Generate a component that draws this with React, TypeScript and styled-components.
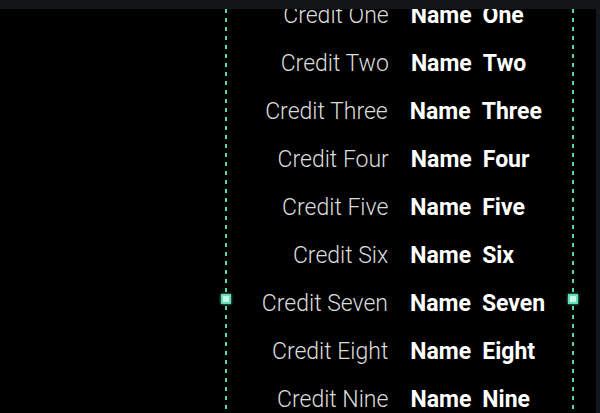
import styled, { createGlobalStyle } from 'styled-components';

const credits = [
  ['Credit One', 'One'],
  ['Credit Two', 'Two'],
  ['Credit Three', 'Three'],
  ['Credit Four', 'Four'],
  ['Credit Five', 'Five'],
  ['Credit Six', 'Six'],
  ['Credit Seven', 'Seven'],
  ['Credit Eight', 'Eight'],
  ['Credit Nine', 'Nine'],
  ['Credit Ten', 'Ten'],
];

const App = () => {
  return (
    <>
      <GlobalStyle />
      <Screen>
        <TopBar />
        <Stage>
          <Margin />
          <Guide>
            <Handle />
          </Guide>
          <Viewport>
            <List>
              {credits.map(([credit, name]) => (
                <Row key={credit}>
                  <Credit>{credit}</Credit>
                  <Name>
                    <span>Name</span>
                    <span>{name}</span>
                  </Name>
                </Row>
              ))}
            </List>
          </Viewport>
          <Guide>
            <Handle />
          </Guide>
          <Gutter />
          <Scrollbar />
        </Stage>
      </Screen>
    </>
  );
};

const GlobalStyle = createGlobalStyle`
  html, body {
    margin: 0;
    padding: 0;
    background: #000;
  }
  body {
    font-family: Roboto, "Liberation Sans", sans-serif;
  }
`;

const Screen = styled.div`
  width: 600px;
  height: 413px;
  display: flex;
  flex-direction: column;
  background: #000;
  overflow: hidden;
`;

const TopBar = styled.div`
  height: 9px;
  flex-shrink: 0;
  background: #121619;
  position: relative;
  z-index: 1;
`;

const Stage = styled.div`
  flex: 1;
  display: flex;
  min-height: 0;
`;

const Margin = styled.div`
  width: 225px;
  flex-shrink: 0;
`;

const Guide = styled.div`
  width: 2px;
  flex-shrink: 0;
  position: relative;
  background: repeating-linear-gradient(
    to bottom,
    #5ad6ad 0px,
    #5ad6ad 4px,
    transparent 4px,
    transparent 9px
  );
`;

const Handle = styled.div`
  position: absolute;
  top: 285px;
  left: -4px;
  width: 10px;
  height: 10px;
  box-sizing: border-box;
  background: #c2fbe9;
  border: 2px solid #66dcb8;
  box-shadow: 0 0 3px #4fcfa6;
`;

const Viewport = styled.div`
  width: 345px;
  flex-shrink: 0;
  overflow: hidden;
`;

const List = styled.div`
  margin-top: -18px;
  padding-left: 8px;
  display: flex;
  flex-direction: column;
`;

const Row = styled.div`
  height: 48px;
  display: flex;
  align-items: center;
  justify-content: center;
  gap: 22px;
  font-size: 23px;
  white-space: nowrap;
`;

const Credit = styled.span`
  font-weight: 300;
  color: #dcdcdc;
`;

const Name = styled.span`
  display: flex;
  gap: 11px;
  font-weight: 700;
  color: #fff;
`;

const Gutter = styled.div`
  flex: 1;
`;

const Scrollbar = styled.div`
  width: 4px;
  flex-shrink: 0;
  background: #15181b;
`;

export default App;
